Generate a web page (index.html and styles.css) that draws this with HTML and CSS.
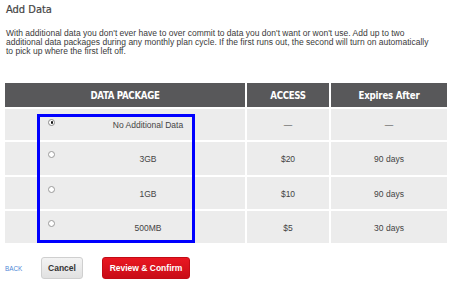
FILE: index.html
```html
<!DOCTYPE html>
<html>
<head>
<meta charset="utf-8">
<link rel="stylesheet" href="styles.css">
</head>
<body>
<div class="page">
  <h1 class="title">Add Data</h1>
  <p class="intro">With additional data you don't ever have to over commit to data you don't want or won't use. Add up to two additional data packages during any monthly plan cycle. If the first runs out, the second will turn on automatically to pick up where the first left off.</p>

  <div class="table-wrap">
    <div class="grid">
      <div class="th">DATA PACKAGE</div>
      <div class="th">ACCESS</div>
      <div class="th th-mixed">Expires After</div>

      <div class="td pkg"><span class="radio checked"></span><span class="label">No Additional Data</span></div>
      <div class="td">—</div>
      <div class="td">—</div>

      <div class="td pkg"><span class="radio"></span><span class="label">3GB</span></div>
      <div class="td">$20</div>
      <div class="td">90 days</div>

      <div class="td pkg"><span class="radio"></span><span class="label">1GB</span></div>
      <div class="td">$10</div>
      <div class="td">90 days</div>

      <div class="td pkg"><span class="radio"></span><span class="label">500MB</span></div>
      <div class="td">$5</div>
      <div class="td">30 days</div>
    </div>
    <div class="highlight"></div>
  </div>

  <div class="actions">
    <a class="back" href="#">BACK</a>
    <button class="btn btn-cancel">Cancel</button>
    <button class="btn btn-primary">Review &amp; Confirm</button>
  </div>
</div>
</body>
</html>
```

FILE: styles.css
```css
html, body {
  margin: 0;
  padding: 0;
  background: #ffffff;
}

.page {
  padding: 0 7px 0 5px;
  font-family: "Liberation Sans", Arial, sans-serif;
  color: #333333;
}

.title {
  margin: 4px 0 0 1px;
  font-family: "DejaVu Sans Condensed", "DejaVu Sans", sans-serif;
  font-size: 11px;
  line-height: 12px;
  font-weight: normal;
  color: #444444;
  -webkit-text-stroke: 0.2px #444444;
}

.intro {
  margin: 13px 0 0 1px;
  width: 430px;
  font-size: 8.5px;
  line-height: 9px;
  color: #3a3a3a;
}

.table-wrap {
  position: relative;
  margin-top: 27px;
  width: 442px;
}

.grid {
  display: grid;
  grid-template-columns: 240px 82px 116px;
  grid-template-rows: 24px 30.5px 33px 32px 32.5px;
  column-gap: 2px;
  row-gap: 2px;
}

.th {
  background: #58585a;
  color: #ffffff;
  font-family: "DejaVu Sans Condensed", "DejaVu Sans", sans-serif;
  font-weight: bold;
  font-size: 9.6px;
  letter-spacing: -0.3px;
  display: flex;
  align-items: center;
  justify-content: center;
  padding-top: 1px;
  box-sizing: border-box;
}

.th-mixed {
  letter-spacing: -0.2px;
}

.td {
  background: #ececec;
  color: #444444;
  font-size: 8.5px;
  display: flex;
  align-items: center;
  justify-content: center;
  padding-top: 2px;
  box-sizing: border-box;
}

.td.pkg {
  justify-content: flex-start;
  align-items: stretch;
  padding: 0 4px 0 43px;
}

.radio {
  flex: none;
  width: 7px;
  height: 7px;
  margin-top: 9.5px;
  border: 1px solid #9a9a9a;
  border-radius: 50%;
  background: #ffffff;
  box-sizing: border-box;
  position: relative;
}

.radio.checked {
  border-color: #8a8a8a;
}

.radio.checked::after {
  content: "";
  position: absolute;
  left: 1.5px;
  top: 1.5px;
  width: 2.5px;
  height: 2.5px;
  border-radius: 50%;
  background: #111111;
}

.label {
  flex: 1;
  display: flex;
  align-items: center;
  justify-content: center;
  padding-top: 2px;
}

.highlight {
  position: absolute;
  left: 32px;
  top: 31px;
  width: 158px;
  height: 129px;
  border: 3px solid #0000ff;
  box-sizing: border-box;
  pointer-events: none;
}

.actions {
  display: flex;
  align-items: center;
  margin-top: 14px;
}

.back {
  font-size: 6.3px;
  color: #4d86d6;
  text-decoration: none;
  width: 36px;
  padding-top: 1px;
}

.btn {
  font-family: "Liberation Sans", Arial, sans-serif;
  font-weight: bold;
  font-size: 8.5px;
  border-radius: 3px;
  padding: 0;
  box-sizing: border-box;
  cursor: pointer;
}

.btn-cancel {
  width: 42px;
  height: 22px;
  background: linear-gradient(#f3f3f3, #e1e1e1);
  border: 1px solid #cfcfcf;
  color: #333333;
}

.btn-primary {
  margin-left: 19px;
  width: 88px;
  height: 21.5px;
  background: linear-gradient(#ea1722, #c80c17);
  border: 1px solid #c20b15;
  color: #ffffff;
}
```
